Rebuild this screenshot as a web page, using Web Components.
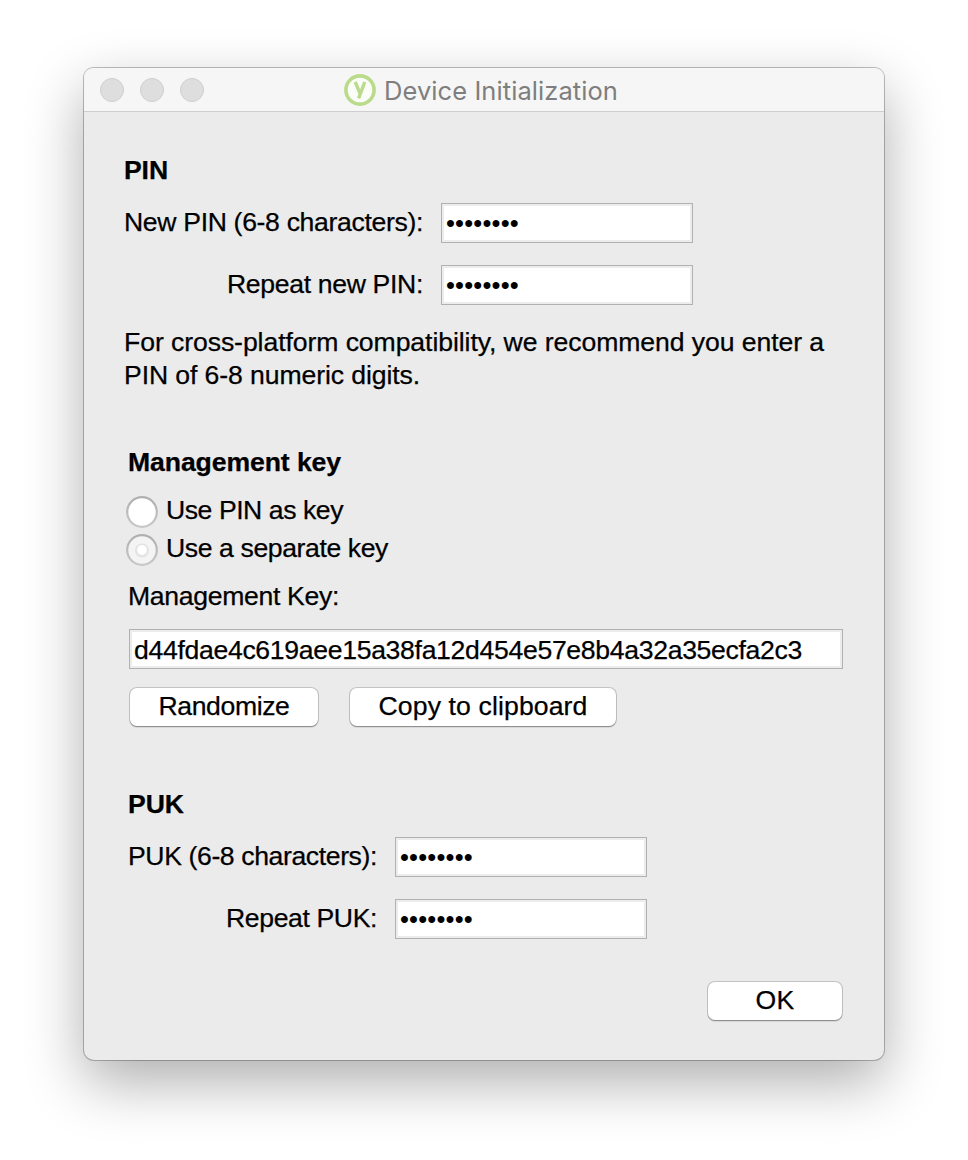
<!DOCTYPE html>
<html lang="en">
<head>
<meta charset="utf-8">
<title>Device Initialization</title>
<style>
html, body { margin: 0; background: #fff; }
body { width: 968px; height: 1160px; overflow: hidden; font-family: "Liberation Sans", Arial, sans-serif; font-size: 26.6px; line-height: 32px; color: #000; }
</style>
</head>
<body>
<init-dialog></init-dialog>
<script>
const define = (name, html, ready) => customElements.define(name, class extends HTMLElement {
  connectedCallback() {
    if (this.shadowRoot) return;
    this.attachShadow({ mode: 'open' }).innerHTML = html;
    if (ready) ready(this, this.shadowRoot);
  }
});

// A single line of text tracked to a given advance width (attribute w).
define('ui-text', `<style>
  :host { display: block; flex: none; white-space: nowrap; height: 32px; line-height: 32px; -webkit-text-stroke: .25px currentColor; }
  :host([bold]) { font-weight: 700; }
  :host([dots]) { font-size: 25.5px; line-height: 30px; -webkit-text-stroke: 0; }
  span { display: inline-block; }
</style><span></span>`, (host, root) => {
  const span = root.querySelector('span');
  span.textContent = host.getAttribute('t');
  const w = Number(host.getAttribute('w'));
  host.style.width = w + 'px';
  const n = span.textContent.length;
  span.style.letterSpacing = ((w - span.getBoundingClientRect().width) / n) + 'px';
});

define('ui-field', `<style>
  :host { box-sizing: border-box; display: flex; flex: none; width: 252px; height: 40px; border: 1px solid #b1b1b1;
    box-shadow: inset 0 0 0 2px #ececec; background: #fff; padding: 4px 0 0 4px; }
  :host([wide]) { width: 714px; }
</style><slot></slot>`);

define('ui-row', `<style>
  :host { display: flex; justify-content: flex-end; height: 40px; }
  .label { padding-top: 3px; }
</style><div class="label"><slot name="label"></slot></div><slot></slot>`);

define('ui-button', `<style>
  :host { box-sizing: border-box; display: flex; flex: none; justify-content: center; height: 38px; margin-top: 1px; padding-top: 2px;
    border-radius: 7px; background: #fff; box-shadow: 0 0 0 1px rgba(0,0,0,.17), 0 1px 1px 0 rgba(0,0,0,.24), 0 2px 1px rgba(0,0,0,.06); }
</style><slot></slot>`);

define('ui-radio', `<style>
  :host { display: flex; height: 38px; gap: 8px; }
  svg { display: block; flex: none; margin-top: 1px; }
  .on { display: none; }
  :host([checked]) .on { display: inline; }
  :host([checked]) .off { display: none; }
</style>
<svg width="32" height="34" viewBox="0 0 32 34">
  <defs><linearGradient id="g" x1="0" y1="0" x2="0" y2="1"><stop offset="0" stop-color="#b0b0b0"/><stop offset="1" stop-color="#c8c8c8"/></linearGradient></defs>
  <circle class="off" cx="16" cy="17" r="14.8" fill="#fff" stroke="url(#g)" stroke-width="2.2"/>
  <g class="on">
    <circle cx="16" cy="17" r="14.8" fill="#f4f4f4" stroke="url(#g)" stroke-width="2.2"/>
    <circle cx="16" cy="17.5" r="7" fill="#e3e3e3"/>
    <circle cx="16" cy="17" r="4.9" fill="#fff"/>
  </g>
</svg><slot></slot>`);

define('title-bar', `<style>
  :host { box-sizing: border-box; display: grid; grid-template-columns: 260px 1fr; height: 44px; background: #f6f6f6; border-bottom: 1px solid #cecece; border-radius: 9px 9px 0 0; }
  .lights { display: flex; gap: 16px; padding: 10px 0 0 16px; }
  i { box-sizing: border-box; width: 24px; height: 24px; border: 1px solid #cfcfcf; border-radius: 50%; background: #dedede; }
  .name { display: flex; padding-top: 6px; gap: 8px; }
  .name ui-text { font-family: Inter, sans-serif; font-size: 25.5px; color: #7e7e7e; margin-top: 1px; -webkit-text-stroke: 0; }
</style>
<div class="lights"><i></i><i></i><i></i></div>
<div class="name">
  <svg width="32" height="32" viewBox="0 0 32 32" fill="none" stroke="#bbdb8c">
    <circle cx="16" cy="16" r="14.1" fill="#fbfdf8" stroke-width="3.6"/>
    <path d="M11.2 8l4.8 11.4M20.8 8l-6.2 16.4" stroke-width="3.4"/>
  </svg>
  <ui-text t="Device Initialization" w="234"></ui-text>
</div>`);

define('init-dialog', `<style>
  :host { box-sizing: border-box; display: block; width: 968px; height: 1160px; padding: 68px 84px 100px; }
  .window { height: 992px; border-radius: 10px; background: #ebebeb;
    box-shadow: 0 0 0 1px rgba(0,0,0,.25), 0 22px 58px rgba(0,0,0,.32); }
  .body { display: flow-root; }
  .pin { padding: 42px 0 0 40px; }
  .grid { display: grid; row-gap: 22px; }
  .pin .grid { width: 569px; margin-top: 17px; }
  .pin ui-field { margin-left: 18px; }
  .note { margin-top: 21px; display: grid; row-gap: 1px; }
  .key { padding: 55px 0 0 44px; }
  .radios { margin: 16px 0 0 -2px; }
  .key ui-text.cap { margin-top: 10px; }
  .key ui-field { margin: 17px 0 0 1px; }
  .buttons { display: flex; gap: 32px; margin: 18px 0 0 2px; }
  .puk { padding: 62px 0 0 44px; }
  .puk .grid { width: 519px; margin-top: 17px; }
  .puk ui-field { margin-left: 18px; }
  .foot { display: flex; justify-content: flex-end; padding: 42px 42px 0 0; }
</style>
<div class="window">
  <title-bar></title-bar>
  <div class="body">
    <div class="pin">
      <ui-text bold t="PIN" w="44"></ui-text>
      <div class="grid">
        <ui-row><ui-text slot="label" t="New PIN (6-8 characters):" w="299"></ui-text><ui-field><ui-text dots t="••••••••" w="73"></ui-text></ui-field></ui-row>
        <ui-row><ui-text slot="label" t="Repeat new PIN:" w="196"></ui-text><ui-field><ui-text dots t="••••••••" w="73"></ui-text></ui-field></ui-row>
      </div>
      <div class="note">
        <ui-text t="For cross-platform compatibility, we recommend you enter a" w="700"></ui-text>
        <ui-text t="PIN of 6-8 numeric digits." w="296"></ui-text>
      </div>
    </div>
    <div class="key">
      <ui-text bold t="Management key" w="213"></ui-text>
      <div class="radios">
        <ui-radio><ui-text t="Use PIN as key" w="177"></ui-text></ui-radio>
        <ui-radio checked><ui-text t="Use a separate key" w="222"></ui-text></ui-radio>
      </div>
      <ui-text class="cap" t="Management Key:" w="211"></ui-text>
      <ui-field wide><ui-text t="d44fdae4c619aee15a38fa12d454e57e8b4a32a35ecfa2c3" w="668"></ui-text></ui-field>
      <div class="buttons">
        <ui-button style="width:188px"><ui-text t="Randomize" w="131"></ui-text></ui-button>
        <ui-button style="width:266px"><ui-text t="Copy to clipboard" w="209"></ui-text></ui-button>
      </div>
    </div>
    <div class="puk">
      <ui-text bold t="PUK" w="56"></ui-text>
      <div class="grid">
        <ui-row><ui-text slot="label" t="PUK (6-8 characters):" w="249"></ui-text><ui-field><ui-text dots t="••••••••" w="73"></ui-text></ui-field></ui-row>
        <ui-row><ui-text slot="label" t="Repeat PUK:" w="151"></ui-text><ui-field><ui-text dots t="••••••••" w="73"></ui-text></ui-field></ui-row>
      </div>
    </div>
    <div class="foot"><ui-button style="width:134px"><ui-text t="OK" w="39"></ui-text></ui-button></div>
  </div>
</div>`);
</script>
</body>
</html>
